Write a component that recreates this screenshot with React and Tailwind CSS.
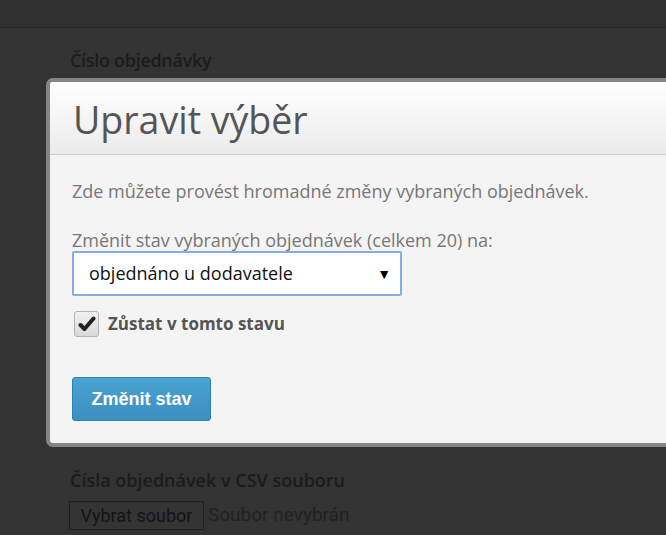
import React from 'react'

const App = () => {
  return (
    <div className="w-[666px] h-[535px] overflow-hidden bg-[#333333] font-['Open_Sans',sans-serif]">
      {/* top bar */}
      <div className="h-[28px] bg-[#303030] border-b border-[#262626]" />

      <div className="mt-[21px] pl-[70px] text-[18px] leading-[22px] font-semibold text-[#1c1c1c] tracking-[-0.3px]">
        Číslo objednávky
      </div>

      {/* modal */}
      <div className="mt-[7px] ml-[46px] w-[680px] border-4 border-[#858585] rounded-[7px] bg-[#f4f4f4] overflow-hidden">
        <div className="h-[73px] bg-gradient-to-b from-[#ffffff] to-[#ebebeb] border-b border-[#cccccc] flex items-center pl-[23px] pt-[3px]">
          <h1 className="text-[37.5px] leading-[42px] text-[#555555]">Upravit výběr</h1>
        </div>
        <div className="pl-[22px] pt-[25px] pb-[22px]">
          <p className="text-[18px] leading-[22px] text-[#777777]">
            Zde můžete provést hromadné změny vybraných objednávek.
          </p>
          <p className="mt-[27px] text-[18px] leading-[22px] text-[#777777]">
            Změnit stav vybraných objednávek (celkem 20) na:
          </p>
          <div className="w-[330px] h-[45px] bg-white border-2 border-[#86aee6] rounded-[2px] flex items-center justify-between pl-[15px] pr-[9px]">
            <span className="text-[18px] text-[#111111]">objednáno u dodavatele</span>
            <span className="text-[14px] text-black">▼</span>
          </div>
          <div className="mt-[15px] flex items-center">
            <div className="ml-[2px] w-[25px] h-[26px] rounded-[3px] border border-[#b3b3b3] bg-gradient-to-b from-[#f2f2f2] to-[#d9d9d9] flex items-center justify-center">
              <svg width="18" height="16" viewBox="0 0 18 16">
                <path d="M2.5 9 L6.5 13 L15.5 2.5" fill="none" stroke="#222" strokeWidth="4" strokeLinecap="round" strokeLinejoin="round" />
              </svg>
            </div>
            <span className="ml-[9px] text-[17px] font-bold text-[#555555]">Zůstat v tomto stavu</span>
          </div>
          <button className="mt-[40px] w-[139px] h-[44px] rounded-[3px] border border-[#2f7fae] bg-gradient-to-b from-[#4ba3d2] to-[#3a90c1] text-white text-[18px] font-bold font-['Liberation_Sans',Arial,sans-serif]">
            Změnit stav
          </button>
        </div>
      </div>

      <div className="mt-[22px] pl-[70px] text-[18px] leading-[22px] font-semibold text-[#1c1c1c]">
        Čísla objednávek v CSV souboru
      </div>
      <div className="mt-[10px] pl-[69px] flex items-center">
        <div className="h-[29px] w-[135px] border border-[#1f1f1f] bg-[#343434] flex items-center justify-center text-[18px] text-[#141414] font-['Roboto',sans-serif]">
          Vybrat soubor
        </div>
        <span className="ml-[4px] text-[19px] text-[#222222] font-['Roboto',sans-serif]">Soubor nevybrán</span>
      </div>
    </div>
  )
}

export default App
